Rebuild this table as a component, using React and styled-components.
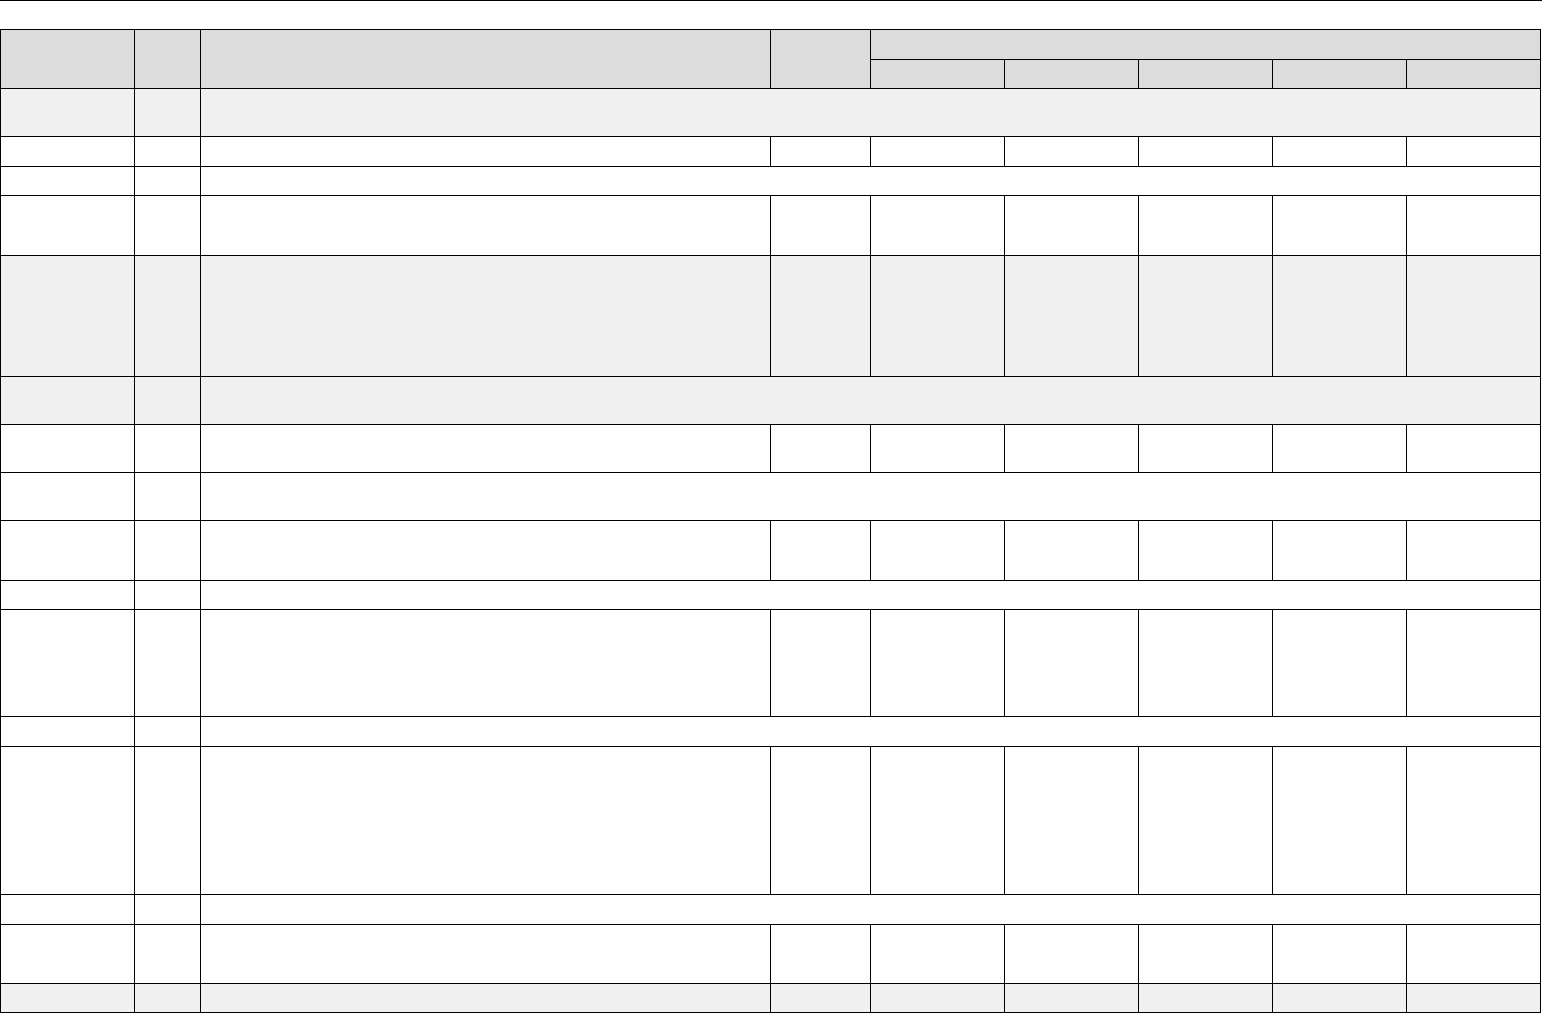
import React from "react";
import styled, { createGlobalStyle } from "styled-components";

const Global = createGlobalStyle`
  html, body { margin: 0; padding: 0; background: #ffffff; }
  body { font-family: "Liberation Sans", Arial, sans-serif; font-size: 13px; color: #000; }
`;

const Page = styled.div`
  display: flex;
  flex-direction: column;
  width: 1544px;
`;

const Rule = styled.div`
  width: 1542px;
  height: 1px;
  background: #000;
  margin-bottom: 28px;
`;

const Table = styled.table`
  border-collapse: collapse;
  table-layout: fixed;
  width: 1541px;
`;

const Row = styled.tr`
  height: ${(p) => p.$h}px;
  background: ${(p) => (p.$gray ? "#f0f0f0" : "#ffffff")};
`;

const HeadRow = styled.tr`
  height: ${(p) => p.$h}px;
  background: #dcdcdc;
`;

const Th = styled.th`
  border: 1px solid #000;
  padding: 0;
  font-weight: bold;
`;

const Td = styled.td`
  border: 1px solid #000;
  padding: 0;
`;

const widths = [134, 66, 570, 100, 134, 134, 134, 134, 134];

const rows = [
  { h: 48, gray: true, merged: true },
  { h: 30 },
  { h: 29, merged: true },
  { h: 60 },
  { h: 121, gray: true },
  { h: 48, gray: true, merged: true },
  { h: 48 },
  { h: 48, merged: true },
  { h: 60 },
  { h: 29, merged: true },
  { h: 107 },
  { h: 30, merged: true },
  { h: 148 },
  { h: 30, merged: true },
  { h: 59 },
  { h: 29, gray: true },
];

export default function App() {
  return (
    <Page>
      <Global />
      <Rule />
      <Table>
        <colgroup>
          {widths.map((w, i) => (
            <col key={i} style={{ width: w }} />
          ))}
        </colgroup>
        <thead>
          <HeadRow $h={30}>
            <Th rowSpan={2} />
            <Th rowSpan={2} />
            <Th rowSpan={2} />
            <Th rowSpan={2} />
            <Th colSpan={5} />
          </HeadRow>
          <HeadRow $h={29}>
            <Th />
            <Th />
            <Th />
            <Th />
            <Th />
          </HeadRow>
        </thead>
        <tbody>
          {rows.map((r, i) =>
            r.merged ? (
              <Row key={i} $h={r.h} $gray={r.gray}>
                <Td />
                <Td />
                <Td colSpan={7} />
              </Row>
            ) : (
              <Row key={i} $h={r.h} $gray={r.gray}>
                {widths.map((_, j) => (
                  <Td key={j} />
                ))}
              </Row>
            )
          )}
        </tbody>
      </Table>
    </Page>
  );
}
